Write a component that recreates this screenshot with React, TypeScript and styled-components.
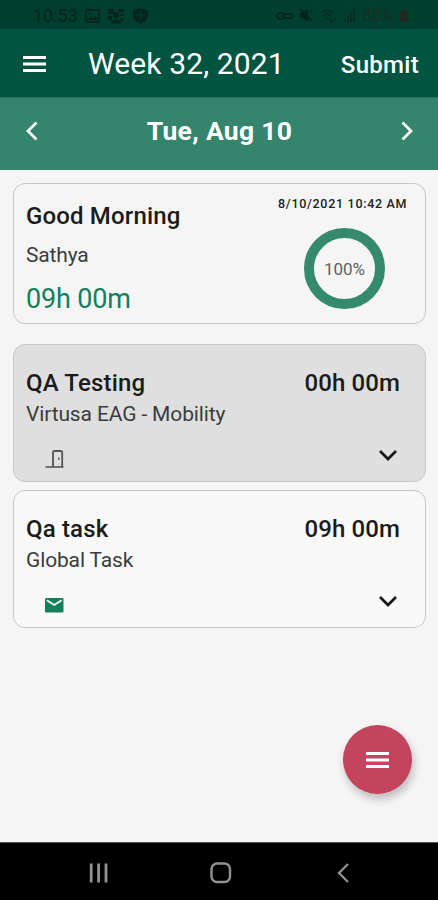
import React from "react";
import styled, { createGlobalStyle } from "styled-components";

const Global = createGlobalStyle`
  * { box-sizing: border-box; }
  body { margin: 0; background: #f5f5f5; font-family: Roboto, "Liberation Sans", sans-serif; }
  svg { display: block; flex: none; }
`;

const Screen = styled.div`
  position: relative;
  width: 438px;
  height: 900px;
  display: flex;
  flex-direction: column;
  overflow: hidden;
  background: #f5f5f5;
`;

const StatusBar = styled.div`
  height: 29px;
  padding: 2px 29px 0 33px;
  display: flex;
  align-items: center;
  justify-content: space-between;
  background: #003f2e;
  color: #00261b;
`;

const StatusGroup = styled.div<{ $gap: number }>`
  display: flex;
  align-items: center;
  gap: ${(p) => p.$gap}px;
`;

const Label = styled.span<{
  $size: number;
  $line: number;
  $weight?: number;
  $color?: string;
  $spacing?: number;
}>`
  display: block;
  white-space: nowrap;
  font-size: ${(p) => p.$size}px;
  line-height: ${(p) => p.$line}px;
  font-weight: ${(p) => p.$weight ?? 400};
  color: ${(p) => p.$color ?? "inherit"};
  letter-spacing: ${(p) => p.$spacing ?? 0}px;
`;

const AppBar = styled.header`
  height: 68px;
  display: flex;
  align-items: center;
  padding: 2px 19px 0 23px;
  background: #005440;
  color: #fff;
`;

const AppTitle = styled.div`
  flex: 1;
  padding-left: 42px;
`;

const Submit = styled.div`
  padding-top: 2px;
`;

const DateBar = styled.div`
  height: 73px;
  padding: 0 24px 6px 25px;
  display: flex;
  align-items: center;
  justify-content: space-between;
  background: #35846c;
  border-top: 1px solid #23735b;
  color: #fff;
`;

const Content = styled.main`
  flex: 1;
  padding: 13px 12px 0 13px;
`;

const Card = styled.section<{ $fill: string; $height: number; $gap: number }>`
  height: ${(p) => p.$height}px;
  margin-bottom: ${(p) => p.$gap}px;
  display: flex;
  justify-content: space-between;
  border: 1px solid #c6c6c6;
  border-radius: 12px;
  background: ${(p) => p.$fill};
`;

const SummaryText = styled.div`
  padding: 16px 0 0 12px;
  display: flex;
  flex-direction: column;
  gap: 9px;
`;

const SummarySide = styled.div`
  width: 130px;
  margin-right: 17px;
  padding-top: 12px;
`;

const Ring = styled.div`
  width: 81px;
  height: 81px;
  margin: 16px 0 0 26px;
  display: flex;
  align-items: center;
  justify-content: center;
  border: 10.5px solid #35896d;
  border-radius: 50%;
`;

const TaskBody = styled.div`
  flex: 1;
  display: flex;
  flex-direction: column;
  padding: 23px 25px 0 12px;
`;

const TaskRow = styled.div`
  display: flex;
  align-items: center;
  justify-content: space-between;
`;

const TaskActions = styled(TaskRow)`
  align-items: flex-start;
  padding: 19px 2px 0 19px;
`;

const Fab = styled.button`
  position: absolute;
  left: 343px;
  top: 725px;
  width: 69px;
  height: 69px;
  padding: 0;
  display: flex;
  align-items: center;
  justify-content: center;
  border: 0;
  border-radius: 50%;
  background: #c3445c;
  box-shadow: 2px 5px 8px rgba(0, 0, 0, 0.24);
`;

const NavBar = styled.nav`
  height: 58px;
  padding: 3px 89px 0 89px;
  display: grid;
  grid-template-columns: 121px 1fr auto;
  align-items: center;
  background: #000;
  border-top: 1px solid #555;
`;

const MenuIcon = () => (
  <svg width="23" height="16" viewBox="0 0 23 16">
    <path d="M0 1.5h23M0 8h23M0 14.5h23" stroke="#fff" strokeWidth="2.8" />
  </svg>
);

const Chevron = ({ d, w, h, color }: { d: string; w: number; h: number; color: string }) => (
  <svg width={w} height={h} viewBox={`0 0 ${w} ${h}`}>
    <path d={d} fill="none" stroke={color} strokeWidth="2.7" />
  </svg>
);

const DoorIcon = () => (
  <svg width="20" height="20" viewBox="0 0 20 20" fill="none" stroke="#555">
    <path d="M0.5 18H18.5" strokeWidth="1.6" />
    <path d="M8 18V3.4Q8 2 9.4 2H15.8Q17.2 2 17.2 3.4V18" strokeWidth="1.8" />
    <path d="M13.8 8.5v2.6" strokeWidth="1.4" />
  </svg>
);

const MailIcon = () => (
  <svg width="20" height="20" viewBox="0 0 20 20">
    <rect x="0" y="3" width="18.5" height="14.5" rx="1.2" fill="#12815b" />
    <path d="M1.8 5.2L9.2 10L16.6 5.2" fill="none" stroke="#f9f9f9" strokeWidth="1.8" />
  </svg>
);

const PictureIcon = () => (
  <svg width="15" height="14" viewBox="0 0 15 14">
    <rect x="1" y="1" width="13" height="12" rx="1" fill="none" stroke="currentColor" strokeWidth="1.8" />
    <path d="M2 11L5.5 7L8 9.5L10.5 6.5L13.5 11Z" fill="currentColor" />
    <circle cx="5" cy="4.6" r="1" fill="currentColor" />
  </svg>
);

const PeopleIcon = () => (
  <svg width="18" height="16" viewBox="0 0 18 16" fill="currentColor">
    <path d="M1 1h6v5H1zM1 8h4v4H1zM11 1h6v3h-6zM13 6h4v2h-4zM13 10h4v3h-4z" />
    <circle cx="9" cy="7" r="3.2" />
    <path d="M4 15.5q0-4 5-4t5 4z" />
  </svg>
);

const ShieldIcon = () => (
  <svg width="17" height="16" viewBox="0 0 17 16">
    <path d="M8.5 0L16 2.5V7Q16 13 8.5 16Q1 13 1 7V2.5Z" fill="currentColor" />
    <path d="M8.5 3v9M4 7h9" stroke="#003f2e" strokeWidth="1.1" />
  </svg>
);

const KeyIcon = () => (
  <svg width="17" height="10" viewBox="0 0 17 10" fill="none" stroke="currentColor" strokeWidth="1.8">
    <circle cx="4.5" cy="5" r="3.2" />
    <path d="M7 3.2h8.5v3.6H7" />
  </svg>
);

const MuteIcon = () => (
  <svg width="14" height="15" viewBox="0 0 14 15">
    <path d="M1 5h3l5-4v13L4 10H1z" fill="currentColor" />
    <path d="M1 1l12 12M11 4l2-2" stroke="currentColor" strokeWidth="1.8" />
  </svg>
);

const WifiIcon = () => (
  <svg width="17" height="14" viewBox="0 0 17 14" fill="none" stroke="#002c20" strokeWidth="1.4">
    <path d="M1 4Q7-1 13 4M3 7Q7 3 11 7M5 9.5Q7 8 9 9.5M11 8v5M9 11l2 2l2-2M15 12V8" />
  </svg>
);

const SignalIcon = () => (
  <svg width="13" height="13" viewBox="0 0 13 13">
    <path d="M1 10h2v3H1zM4 7h2v6H4zM7 4h2v9H7zM10 0h2v13h-2z" fill="#002c20" />
  </svg>
);

const BatteryIcon = () => (
  <svg width="10" height="13" viewBox="0 0 10 13">
    <path d="M3 0h4v2h2v11H1V2h2z" fill="#20291f" />
  </svg>
);

const Recents = () => (
  <svg width="20" height="20" viewBox="0 0 20 20">
    <path d="M2.2 0.5v19M9.6 0.5v19M17 0.5v19" stroke="#929292" strokeWidth="2.8" />
  </svg>
);

const Home = () => (
  <svg width="22" height="22" viewBox="0 0 22 22">
    <rect x="1.5" y="1.5" width="18.5" height="18.5" rx="5.5" fill="none" stroke="#929292" strokeWidth="2.4" />
  </svg>
);

const Back = () => (
  <svg width="12" height="20" viewBox="0 0 12 20">
    <path d="M11 1L2 10L11 19" fill="none" stroke="#929292" strokeWidth="2.3" />
  </svg>
);

interface Task {
  name: string;
  group: string;
  time: string;
  fill: string;
  icon: React.ReactNode;
}

const tasks: Task[] = [
  { name: "QA Testing", group: "Virtusa EAG - Mobility", time: "00h 00m", fill: "#dfdfdf", icon: <DoorIcon /> },
  { name: "Qa task", group: "Global Task", time: "09h 00m", fill: "#f9f9f9", icon: <MailIcon /> },
];

export default function App() {
  return (
    <Screen>
      <Global />
      <StatusBar>
        <StatusGroup $gap={7}>
          <Label $size={18} $line={24}>10:53</Label>
          <PictureIcon />
          <PeopleIcon />
          <ShieldIcon />
        </StatusGroup>
        <StatusGroup $gap={6.5}>
          <KeyIcon />
          <MuteIcon />
          <WifiIcon />
          <SignalIcon />
          <Label $size={16} $line={24} $color="#182e22">85%</Label>
          <BatteryIcon />
        </StatusGroup>
      </StatusBar>
      <AppBar>
        <MenuIcon />
        <AppTitle>
          <Label $size={30} $line={34} $spacing={0.12}>Week 32, 2021</Label>
        </AppTitle>
        <Submit>
          <Label $size={24} $line={28} $weight={500} $spacing={0.3}>Submit</Label>
        </Submit>
      </AppBar>
      <DateBar>
        <Chevron w={14} h={20} d="M11.5 1.5L3 10L11.5 18.5" color="#fff" />
        <Label $size={26.5} $line={30} $weight={700} $spacing={0.3}>Tue, Aug 10</Label>
        <Chevron w={14} h={20} d="M2.5 1.5L11 10L2.5 18.5" color="#fff" />
      </DateBar>
      <Content>
        <Card $fill="#f5f5f5" $height={141} $gap={20}>
          <SummaryText>
            <Label $size={24} $line={32} $weight={500} $color="#1b1b1b" $spacing={0.16}>Good Morning</Label>
            <Label $size={21} $line={28} $color="#3c3c3c" $spacing={-0.15}>Sathya</Label>
            <Label $size={27} $line={42} $color="#12805b" $spacing={-0.15}>09h 00m</Label>
          </SummaryText>
          <SummarySide>
            <Label $size={12.5} $line={16} $weight={500} $color="#222" $spacing={0.7}>8/10/2021 10:42 AM</Label>
            <Ring>
              <Label $size={17} $line={20} $color="#626262">100%</Label>
            </Ring>
          </SummarySide>
        </Card>
        {tasks.map((t) => (
          <Card key={t.name} $fill={t.fill} $height={138} $gap={8}>
            <TaskBody>
              <TaskRow>
                <Label $size={24} $line={30} $weight={500} $color="#1b1b1b" $spacing={0.16}>{t.name}</Label>
                <Label $size={24} $line={30} $weight={500} $color="#1b1b1b" $spacing={0.1}>{t.time}</Label>
              </TaskRow>
              <Label $size={21} $line={32} $color="#3c3c3c" $spacing={-0.14}>{t.group}</Label>
              <TaskActions>
                {t.icon}
                <Chevron w={20} h={14} d="M2 2L10 10L18 2" color="#171717" />
              </TaskActions>
            </TaskBody>
          </Card>
        ))}
      </Content>
      <Fab aria-label="Menu">
        <MenuIcon />
      </Fab>
      <NavBar>
        <Recents />
        <Home />
        <Back />
      </NavBar>
    </Screen>
  );
}
